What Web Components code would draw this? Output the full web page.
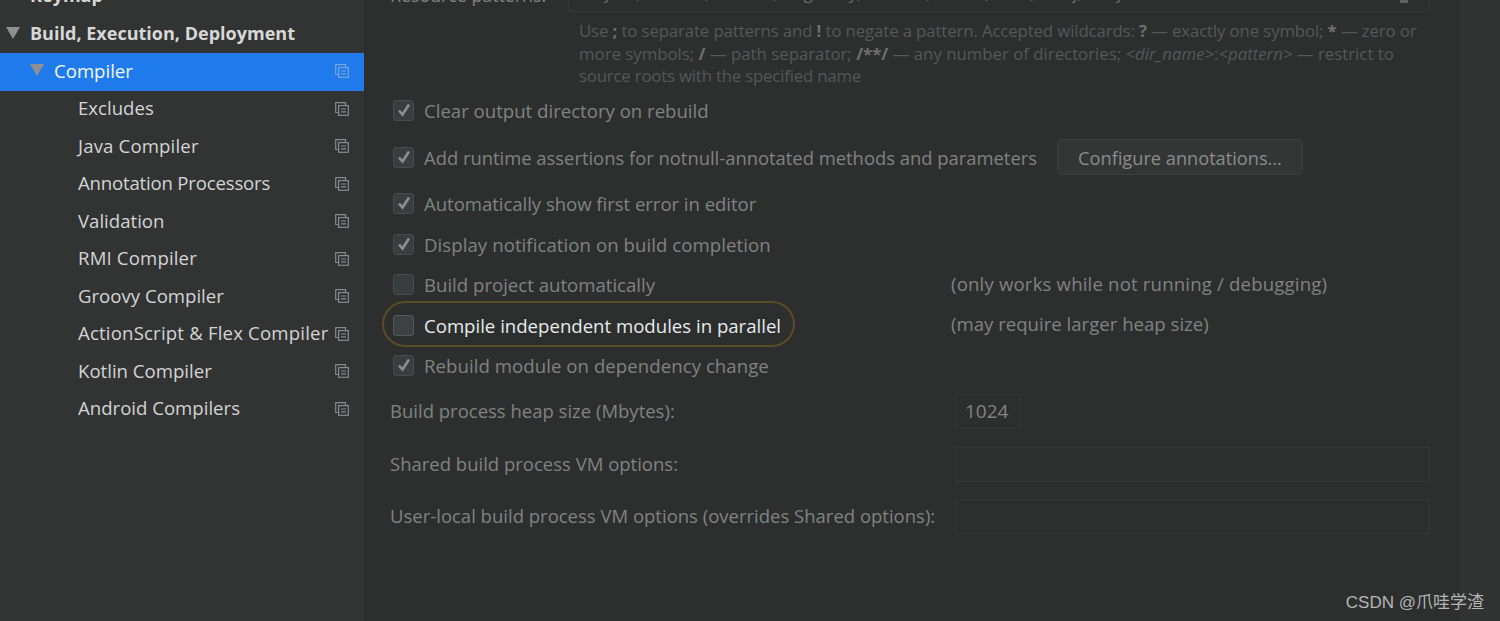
<!DOCTYPE html>
<html>
<head>
<meta charset="utf-8">
<style>
    html, body { margin: 0; height: 621px; overflow: hidden; background: #2d2f2e; }
    body { font-family: "Open Sans", "Noto Sans CJK SC", sans-serif; font-size: 18.5px; }
    .page { display: flex; height: 621px; }
</style>
</head>
<body>
<div class="page">
    <settings-tree>
        <tree-row level="0" bold>Keymap</tree-row>
        <tree-row level="0" bold arrow>Build, Execution, Deployment</tree-row>
        <tree-row level="1" arrow selected copy>Compiler</tree-row>
        <tree-row level="2" copy>Excludes</tree-row>
        <tree-row level="2" copy style="letter-spacing:.15px">Java Compiler</tree-row>
        <tree-row level="2" copy style="letter-spacing:-.19px">Annotation Processors</tree-row>
        <tree-row level="2" copy>Validation</tree-row>
        <tree-row level="2" copy style="letter-spacing:.15px">RMI Compiler</tree-row>
        <tree-row level="2" copy>Groovy Compiler</tree-row>
        <tree-row level="2" copy style="letter-spacing:.18px">ActionScript &amp; Flex Compiler</tree-row>
        <tree-row level="2" copy>Kotlin Compiler</tree-row>
        <tree-row level="2" copy>Android Compilers</tree-row>
    </settings-tree>
    <compiler-panel>
        <pattern-row></pattern-row>
        <check-row checked>Clear output directory on rebuild</check-row>
        <check-row checked style="margin-top:7px;font-size:18.4px">Add runtime assertions for notnull-annotated methods and parameters<dark-button slot="after">Configure annotations...</dark-button></check-row>
        <check-row checked style="margin-top:6px;letter-spacing:-.05px">Automatically show first error in editor</check-row>
        <check-row checked style="margin-top:1px;letter-spacing:.07px">Display notification on build completion</check-row>
        <check-row note="(only works while not running / debugging)">Build project automatically</check-row>
        <check-row style="margin-top:1px" active note="(may require larger heap size)">Compile independent modules in parallel</check-row>
        <check-row checked style="letter-spacing:.06px">Rebuild module on dependency change</check-row>
        <form-row style="margin-top:1px" short value="1024">Build process heap size (Mbytes):</form-row>
        <form-row style="margin-top:2px">Shared build process VM options:</form-row>
        <form-row style="margin-top:1px">User-local build process VM options (overrides Shared options):</form-row>
    </compiler-panel>
    <scroll-strip></scroll-strip>
</div>
<csdn-mark>CSDN @爪哇学渣</csdn-mark>

<script>
class SettingsTree extends HTMLElement{
    constructor(){
        super();
        this.attachShadow({mode:"open"});
        this.shadowRoot.innerHTML = `
        <style>
            :host{ display:flex; flex-direction:column; flex:none; width:364px; height:643px; margin-top:-22px; background:#323333; }
        </style>
        <slot></slot>`
    }
}
class TreeRow extends HTMLElement{
    constructor(){
        super();
        this.attachShadow({mode:"open"});
        const level = +this.getAttribute("level");
        const arrow = this.hasAttribute("arrow") ? `<svg class="arrow" width="14" height="14" viewBox="0 0 14 14"><path d="M0 1H14L7 13Z" fill="#8f9191"/></svg>` : "";
        const copy = this.hasAttribute("copy") ? `<svg class="copy" width="14" height="14" viewBox="0 0 14 14" fill="none" stroke="${this.hasAttribute("selected") ? "#7aa3d6" : "#868a8c"}" stroke-width="1.2"><path d="M3.5 10.5H.7V.7H10.5V3.5"/><rect x="3.6" y="3.6" width="9.7" height="9.7"/><path d="M6 7H11M6 9.8H11"/></svg>` : "";
        this.shadowRoot.innerHTML = `
        <style>
            :host{ display:block; }
            .row{
                display:flex; align-items:center; height:37.5px; box-sizing:border-box;
                padding-left:${6 + level * 24}px; padding-right:15px; padding-bottom:3px;
                color:#d2d4d5; font-size:18.6px; white-space:nowrap;
            }
            :host([bold]) .row{ font-weight:700; color:#d6d8d8; font-size:18.05px; }
            :host([selected]) .row{ background:#1f7aec; color:#f4f8fd; }
            .slotbox{ flex:1; padding-left:${this.hasAttribute("arrow") ? 10 : 24}px; }
            .arrow{ flex:none; }
            .copy{ flex:none; margin-top:2px; }
        </style>
        <div class="row">${arrow}<div class="slotbox"><slot></slot></div>${copy}</div>`
    }
}
class CompilerPanel extends HTMLElement{
    constructor(){
        super();
        this.attachShadow({mode:"open"});
        this.shadowRoot.innerHTML = `
        <style>
            :host{ display:flex; flex-direction:column; flex:1; min-width:0; padding:0 30px 0 26px; color:#808283; }
        </style>
        <slot></slot>`
    }
}
class PatternRow extends HTMLElement{
    constructor(){
        super();
        this.attachShadow({mode:"open"});
        this.shadowRoot.innerHTML = `
        <style>
            :host{ display:block; height:90px; }
            .top{ display:flex; height:35px; margin-top:-23px; }
            .lbl{ width:178px; flex:none; line-height:36px; color:#808283; font-size:17.8px; white-space:nowrap; }
            .box{
                flex:1; min-width:0; box-sizing:border-box; border:1px solid #363837; border-top:0; padding-left:10px;
                overflow:hidden; white-space:nowrap; line-height:32px; color:#6a6c6c; font-size:17px; position:relative;
            }
            /* little resize corner at the end of the field */
            .corner{ position:absolute; right:21px; bottom:8px; width:8px; height:4px; background:#5d5f60; }
            .help{ margin:8px 0 0 189px; font-size:16.8px; line-height:22.5px; color:#555758; white-space:nowrap; }
            .help strong{ color:#6e7071; }
            .l1{ letter-spacing:-.12px; }
            .l3{ letter-spacing:-.19px; }
        </style>
        <div class="top">
            <div class="lbl">Resource patterns:</div>
            <div class="box">!?*.java;!?*.form;!?*.class;!?*.groovy;!?*.scala;!?*.flex;!?*.kt;!?*.clj;!?*.aj<span class="corner"></span></div>
        </div>
        <div class="help"><span class="l1">Use <strong>;</strong> to separate patterns and <strong>!</strong> to negate a pattern. Accepted wildcards: <strong>?</strong> — exactly one symbol; <strong>*</strong> — zero or</span><br>more symbols; <strong>/</strong> — path separator; <strong>/**/</strong> — any number of directories; <i>&lt;dir_name&gt;</i>:<i>&lt;pattern&gt;</i> — restrict to<br><span class="l3">source roots with the specified name</span></div>`
    }
}
class CheckRow extends HTMLElement{
    constructor(){
        super();
        this.attachShadow({mode:"open"});
        const tick = this.hasAttribute("checked") ? `<svg width="14" height="14" viewBox="0 0 14 14" fill="none" stroke="#8a8c8d" stroke-width="2.6"><path d="M2 7.5L5.5 11.5L12 1.5"/></svg>` : "";
        const note = this.getAttribute("note");
        this.shadowRoot.innerHTML = `
        <style>
            :host{ display:flex; align-items:center; position:relative; height:40px; font-size:18.6px; }
            .pill{ display:flex; align-items:center; gap:10px; padding-left:3px; white-space:nowrap; color:#808283; }
            .box{
                flex:none; display:flex; align-items:center; justify-content:center;
                width:21px; height:21px; box-sizing:border-box; background:#3a3d3e; border:1px solid #494c4d; border-radius:3px;
            }
            .text{ position:relative; top:var(--text-top, 0); }
            .note{ position:absolute; left:561px; color:#808283; font-size:18.6px; white-space:nowrap; margin-top:-2px; letter-spacing:.17px; }
            :host([active]) .note{ letter-spacing:0; margin-top:-4px; }
            ::slotted([slot="after"]){ margin-left:20px; }
            /* orange ring drawn over the row */
            :host([active]) .pill{ color:#e6eaec; }
            :host([active]) .ring{
                position:absolute; left:-8px; top:-4px; width:413px; height:46px; box-sizing:border-box;
                border:2px solid #5a4a25; border-radius:23px; pointer-events:none;
            }
            :host([active]) .box{ background:#3e4143; border-color:#55585a; }
        </style>
        <div class="ring"></div>
        <div class="pill"><span class="box">${tick}</span><span><slot></slot></span></div>
        <slot name="after"></slot>
        ${note ? `<span class="note">${note}</span>` : ""}`
    }
}
class DarkButton extends HTMLElement{
    constructor(){
        super();
        this.attachShadow({mode:"open"});
        this.shadowRoot.innerHTML = `
        <style>
            :host{
                display:flex; align-items:center; justify-content:center; width:246px; height:36px; box-sizing:border-box; padding-top:1px;
                background:#343636; border:1px solid #3e4040; border-radius:4px; color:#8a8c8d; font-size:18.2px; white-space:nowrap;
            }
        </style>
        <slot></slot>`
    }
}
class FormRow extends HTMLElement{
    constructor(){
        super();
        this.attachShadow({mode:"open"});
        this.shadowRoot.innerHTML = `
        <style>
            :host{ display:flex; align-items:center; height:51px; color:#808283; font-size:18.5px; white-space:nowrap; }
            .lbl{ flex:none; width:565px; margin-top:-2px; }
            .field{
                flex:1; height:35px; box-sizing:border-box; border:1px solid #363837; padding-left:9px;
                line-height:33px; color:#808283; font-size:19px;
            }
            :host([short]) .field{ flex:none; width:65px; }
        </style>
        <div class="lbl"><slot></slot></div>
        <div class="field">${this.getAttribute("value") || ""}</div>`
    }
}
class ScrollStrip extends HTMLElement{
    constructor(){
        super();
        this.attachShadow({mode:"open"});
        this.shadowRoot.innerHTML = `<style>:host{ display:block; flex:none; width:40px; background:#313332; }</style>`
    }
}
class CsdnMark extends HTMLElement{
    constructor(){
        super();
        this.attachShadow({mode:"open"});
        this.shadowRoot.innerHTML = `
        <style>
            :host{ position:absolute; right:16px; bottom:8px; color:#b4b6b6; font:17px "Liberation Sans","Noto Sans CJK SC",sans-serif; }
        </style>
        <slot></slot>`
    }
}
customElements.define("settings-tree", SettingsTree)
customElements.define("tree-row", TreeRow)
customElements.define("compiler-panel", CompilerPanel)
customElements.define("pattern-row", PatternRow)
customElements.define("check-row", CheckRow)
customElements.define("dark-button", DarkButton)
customElements.define("form-row", FormRow)
customElements.define("scroll-strip", ScrollStrip)
customElements.define("csdn-mark", CsdnMark)
</script>
</body>
</html>
